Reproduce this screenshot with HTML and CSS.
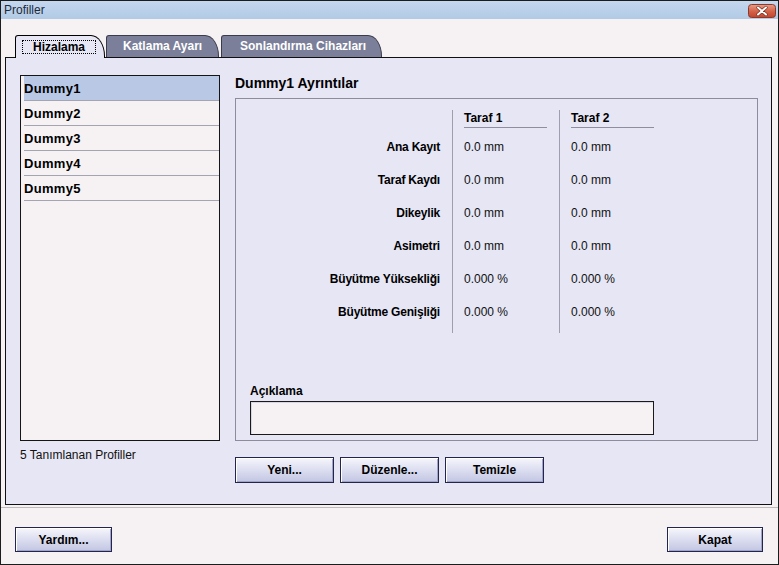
FILE: index.html
```html
<!DOCTYPE html>
<html lang="tr">
<head>
<meta charset="utf-8">
<title>Profiller</title>
<link rel="stylesheet" href="styles.css">
</head>
<body>
<div class="window">
  <div class="titlebar">
    <span class="title">Profiller</span>
    <span class="close" aria-label="Kapat">
      <svg width="28" height="14" viewBox="0 0 28 14">
        <defs>
          <linearGradient id="cg" x1="0" y1="0" x2="0" y2="1">
            <stop offset="0" stop-color="#e7a08a"/>
            <stop offset="0.5" stop-color="#d4644a"/>
            <stop offset="1" stop-color="#c2452e"/>
          </linearGradient>
        </defs>
        <rect x="0.5" y="0.5" width="27" height="13" rx="3" fill="url(#cg)" stroke="#8a3a2c"/>
        <path d="M10 3.5 L18 10.5 M18 3.5 L10 10.5" stroke="#7a2a1e" stroke-width="3.2" stroke-linecap="round"/>
        <path d="M10 3.5 L18 10.5 M18 3.5 L10 10.5" stroke="#ffffff" stroke-width="2" stroke-linecap="round"/>
      </svg>
    </span>
  </div>
  <div class="main">
    <div class="tabs">
      <div class="tab active"><span class="focus">Hizalama</span></div>
      <div class="tab tab-k">Katlama Ayarı</div>
      <div class="tab tab-s">Sonlandırma Cihazları</div>
    </div>
    <div class="panel">
      <div class="left">
        <div class="list">
          <div class="row sel">Dummy1</div>
          <div class="row">Dummy2</div>
          <div class="row">Dummy3</div>
          <div class="row">Dummy4</div>
          <div class="row">Dummy5</div>
        </div>
        <div class="count">5 Tanımlanan Profiller</div>
      </div>
      <div class="right">
        <div class="heading">Dummy1 Ayrıntılar</div>
        <div class="box">
          <div class="table">
            <div class="labels">
              <div class="hdr"></div>
              <div class="cell">Ana Kayıt</div>
              <div class="cell">Taraf Kaydı</div>
              <div class="cell">Dikeylik</div>
              <div class="cell">Asimetri</div>
              <div class="cell">Büyütme Yüksekliği</div>
              <div class="cell">Büyütme Genişliği</div>
            </div>
            <div class="col">
              <div class="hdr">Taraf 1</div>
              <div class="cell">0.0 mm</div>
              <div class="cell">0.0 mm</div>
              <div class="cell">0.0 mm</div>
              <div class="cell">0.0 mm</div>
              <div class="cell">0.000 %</div>
              <div class="cell">0.000 %</div>
            </div>
            <div class="col">
              <div class="hdr">Taraf 2</div>
              <div class="cell">0.0 mm</div>
              <div class="cell">0.0 mm</div>
              <div class="cell">0.0 mm</div>
              <div class="cell">0.0 mm</div>
              <div class="cell">0.000 %</div>
              <div class="cell">0.000 %</div>
            </div>
          </div>
          <div class="desc">
            <div class="desc-label">Açıklama</div>
            <div class="textbox"></div>
          </div>
        </div>
        <div class="actions">
          <button class="btn">Yeni...</button>
          <button class="btn">Düzenle...</button>
          <button class="btn">Temizle</button>
        </div>
      </div>
    </div>
    <div class="sep"></div>
    <div class="footer">
      <button class="btn help">Yardım...</button>
      <button class="btn closebtn">Kapat</button>
    </div>
  </div>
</div>
</body>
</html>
```
FILE: styles.css
```css
html, body {
  margin: 0;
  padding: 0;
}
body {
  width: 779px;
  height: 565px;
  overflow: hidden;
  background: #f6f2f3;
  font-family: "Liberation Sans", Arial, sans-serif;
  color: #111;
}
.window {
  box-sizing: border-box;
  width: 779px;
  height: 565px;
  border: 1px solid #1c1c1c;
  background: #f6f2f3;
}
.titlebar {
  height: 18px;
  background: linear-gradient(#c4d8ee, #b2cae5);
  display: flex;
  align-items: center;
  justify-content: space-between;
  padding: 0 2px 0 3px;
}
.title {
  font-size: 12px;
  color: #1d2a3a;
  line-height: 18px;
}
.close {
  display: flex;
  margin-top: 1px;
}
.main {
  padding-top: 16px;
}
.tabs {
  display: flex;
  align-items: flex-start;
  height: 22px;
  margin-left: 14px;
  position: relative;
  z-index: 2;
}
.tab {
  box-sizing: border-box;
  height: 22px;
  padding: 0 0 0 17px;
  line-height: 21px;
  font-size: 12px;
  font-weight: bold;
  color: #fff;
  background: #7b7f99;
  border: 1px solid #3a3c4c;
  border-bottom: none;
  border-radius: 3px 14px 0 0 / 3px 21px 0 0;
  white-space: nowrap;
}
.tab-k {
  width: 113px;
  margin-left: 1px;
  padding-left: 16px;
}
.tab-s {
  width: 161px;
  margin-left: 2px;
  padding-left: 18px;
}
.tab.active {
  height: 23px;
  margin-bottom: -1px;
  padding: 4px 8px 0 6px;
  line-height: 13px;
  color: #000;
  background: #e6e6f4;
  border-color: #000;
}
.focus {
  display: inline-block;
  border: 1px dotted #000;
  padding: 0 10px;
  line-height: 12px;
}
.panel {
  position: relative;
  z-index: 1;
  box-sizing: border-box;
  width: 767px;
  height: 448px;
  margin-left: 4px;
  border: 1px solid #101010;
  background: #e6e6f4;
  display: grid;
  grid-template-columns: 200px 523px;
  column-gap: 15px;
  padding: 17px 13px 0 14px;
  align-items: start;
}
.list {
  box-sizing: border-box;
  height: 366px;
  border: 1px solid #151515;
  background: #f6f2f3;
  padding-left: 3px;
}
.row {
  height: 24px;
  line-height: 25px;
  border-bottom: 1px solid #a4a4b2;
  font-size: 13px;
  font-weight: bold;
  letter-spacing: 0.3px;
  color: #000;
}
.row.sel {
  background: #b9c8e4;
}
.count {
  margin-top: 7px;
  font-size: 12px;
  line-height: 14px;
  color: #111;
}
.heading {
  font-size: 14px;
  font-weight: bold;
  line-height: 16px;
  color: #000;
}
.box {
  box-sizing: border-box;
  height: 343px;
  margin-top: 7px;
  border: 1px solid #8c8c9e;
  display: flex;
  flex-direction: column;
  padding: 11px 0 5px 0;
}
.table {
  display: flex;
  height: 223px;
}
.labels {
  width: 204px;
  text-align: right;
  font-size: 12px;
  font-weight: bold;
  letter-spacing: -0.2px;
  color: #000;
}
.col {
  width: 83px;
  margin-left: 12px;
  padding-left: 11px;
  border-left: 1px solid #9e9eae;
  font-size: 12px;
}
.hdr {
  box-sizing: border-box;
  height: 18px;
  line-height: 16px;
  border-bottom: 1px solid transparent;
  margin-bottom: 3px;
}
.col .hdr {
  font-weight: bold;
  color: #000;
  border-bottom-color: #8e8e9e;
}
.cell {
  height: 33px;
  line-height: 33px;
  white-space: nowrap;
}
.desc {
  margin-top: auto;
  padding-left: 14px;
}
.desc-label {
  font-size: 12px;
  font-weight: bold;
  line-height: 14px;
  margin-bottom: 3px;
  color: #000;
}
.textbox {
  box-sizing: border-box;
  width: 404px;
  height: 34px;
  border: 1px solid #1a1a1a;
  background: #f6f2f3;
  box-shadow: inset 1px 1px 0 #d8d6de;
}
.actions {
  display: flex;
  gap: 6px;
  margin-top: 16px;
}
.btn {
  box-sizing: border-box;
  width: 99px;
  height: 26px;
  padding: 0;
  border: 1px solid #23254a;
  background: linear-gradient(#f6f6fb, #d9dbef 55%, #c3c6e2);
  box-shadow: inset 1px 1px 0 #ffffff, inset -1px -1px 0 #a0a4ca;
  font-family: "Liberation Sans", Arial, sans-serif;
  font-size: 12px;
  font-weight: bold;
  color: #000;
}
.sep {
  height: 1px;
  margin-top: 2px;
  background: #bdbaba;
}
.footer {
  display: flex;
  justify-content: space-between;
  margin-top: 19px;
  padding: 0 15px 0 14px;
}
.footer .btn {
  height: 25px;
}
.help {
  width: 97px;
}
.closebtn {
  width: 96px;
}
```
